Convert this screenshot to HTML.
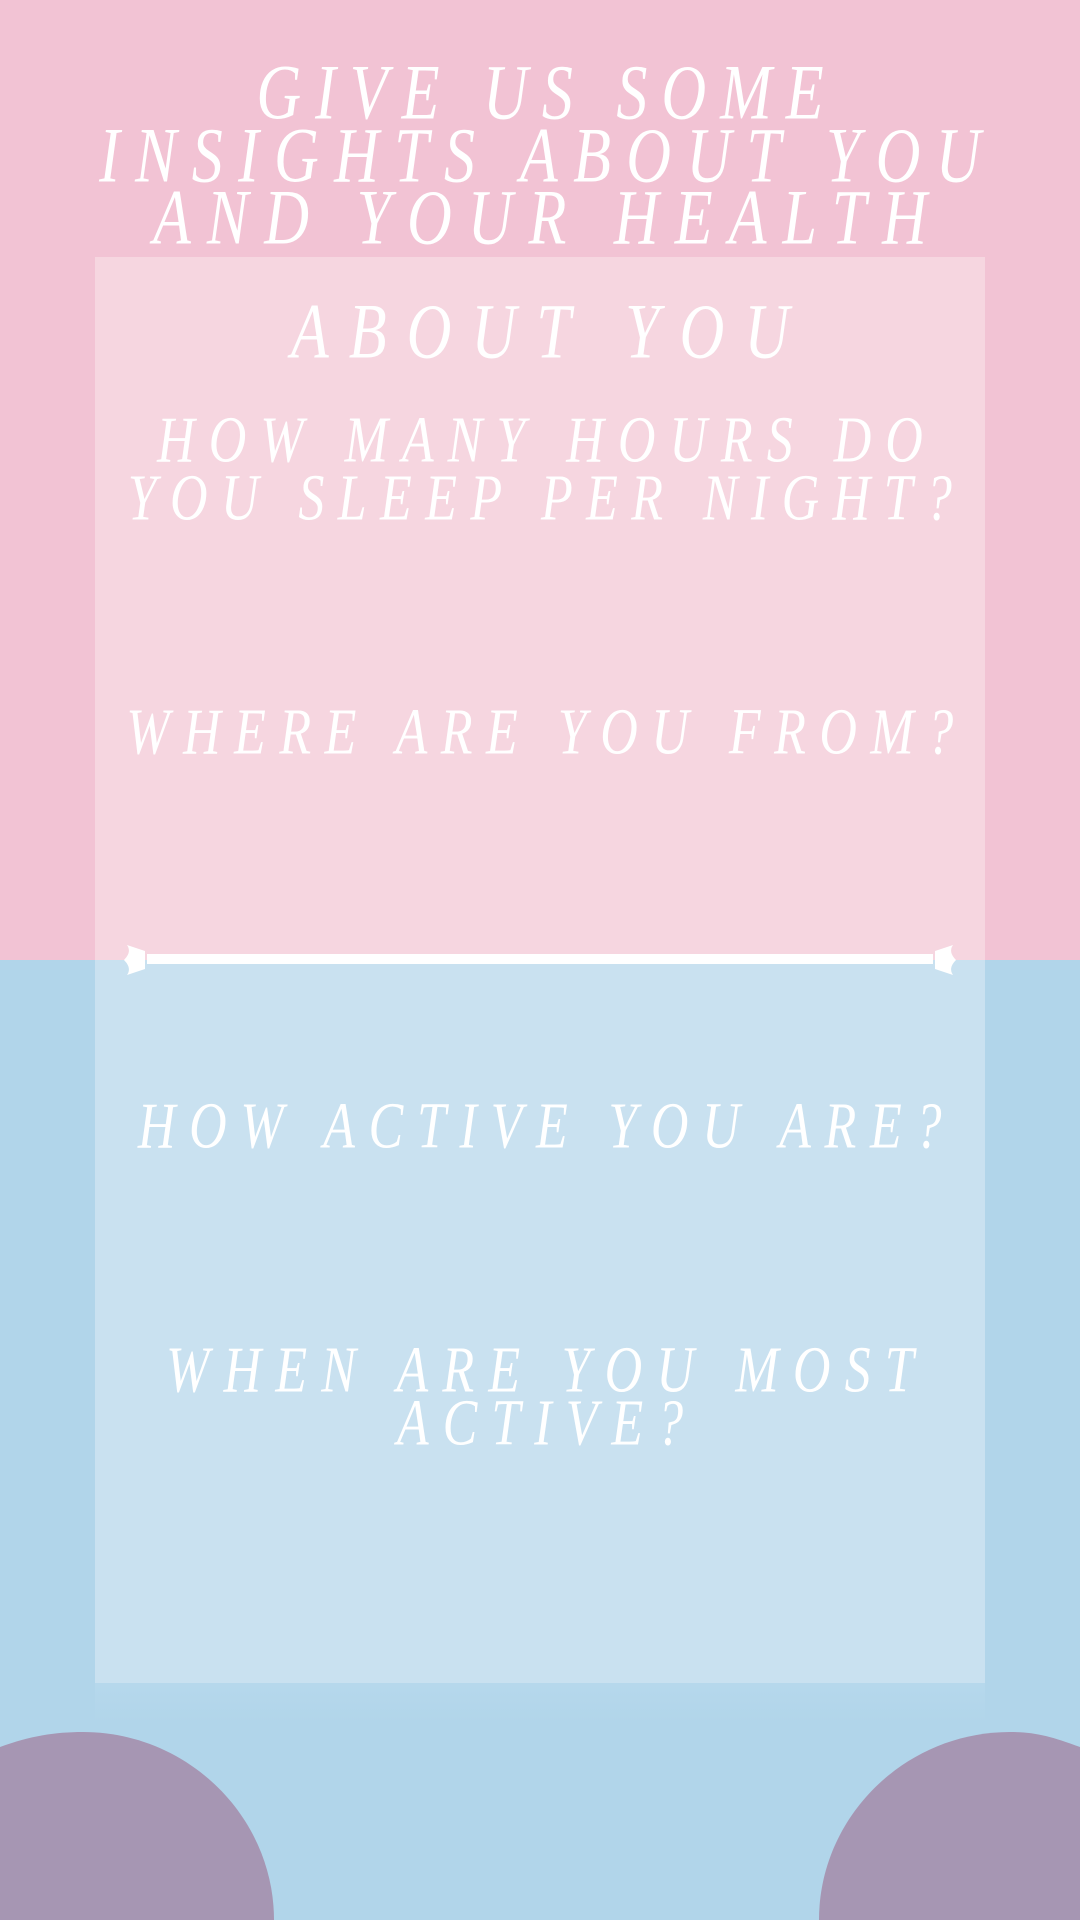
<!DOCTYPE html>
<html><head><meta charset="utf-8"><style>
html,body{margin:0;width:1080px;height:1920px;overflow:hidden}
#p{position:relative;width:1080px;height:1920px;overflow:hidden;background:#b1d5ea;font-family:"Liberation Serif",serif;font-style:italic;color:#fff}
.pink{position:absolute;left:0;top:0;width:1080px;height:960px;background:#f2c3d4}
.panel{position:absolute;left:95px;width:890px}
.l{position:absolute;left:0;width:1080px;text-align:center;white-space:nowrap;line-height:60px;height:60px;transform:scaleY(1.27);transform-origin:center;box-sizing:border-box}
.t{font-size:62px}
.s{font-size:52px}
</style></head><body><div id="p">
<div class="pink"></div>
<div class="panel" style="top:257px;height:703px;background:#f6d6e0"></div>
<div class="panel" style="top:960px;height:723px;background:#c9e1f0"></div>
<div class="panel" style="top:1683px;height:40px;background:linear-gradient(#b6d8ec,#b1d5ea)"></div>
<div class="l t" style="top:63px;letter-spacing:14px;padding-left:14px">GIVE US SOME</div>
<div class="l t" style="top:126px;letter-spacing:15.3px;padding-left:15px">INSIGHTS ABOUT YOU</div>
<div class="l t" style="top:188px;letter-spacing:16px;padding-left:16px">AND YOUR HEALTH</div>
<div class="l t" style="top:302px;letter-spacing:20px;padding-left:20px">ABOUT YOU</div>
<div class="l s" style="top:411px;letter-spacing:14px;padding-left:14px">HOW MANY HOURS DO</div>
<div class="l s" style="top:469px;letter-spacing:13.4px;padding-left:13px">YOU SLEEP PER NIGHT?</div>
<div class="l s" style="top:703px;letter-spacing:13.5px;padding-left:13px">WHERE ARE YOU FROM?</div>
<svg style="position:absolute;left:0;top:938px" width="1080" height="40">
<rect x="147" y="16" width="786" height="10" fill="#fff"/>
<path d="M127 7 L145 13 L145 31 L127 37 Q132 30 124 22 Q132 14 127 7Z" fill="#fff"/>
<path d="M953 7 L935 13 L935 31 L953 37 Q948 30 956 22 Q948 14 953 7Z" fill="#fff"/>
</svg>
<div class="l s" style="top:1097px;letter-spacing:13.7px;padding-left:13px">HOW ACTIVE YOU ARE?</div>
<div class="l s" style="top:1341px;letter-spacing:14.2px;padding-left:14px">WHEN ARE YOU MOST</div>
<div class="l s" style="top:1394px;letter-spacing:14px;padding-left:14px">ACTIVE?</div>
<svg style="position:absolute;left:0;top:0" width="1080" height="1920">
<path d="M0 1747 C30 1736 55 1732 83 1732 C188 1732 274 1817 274 1920 L0 1920Z" fill="#a696b3"/>
<path d="M1080 1747 C1050 1736 1035 1732 1010 1732 C905 1732 819 1817 819 1920 L1080 1920Z" fill="#a696b3"/>
</svg>
</div></body></html>
